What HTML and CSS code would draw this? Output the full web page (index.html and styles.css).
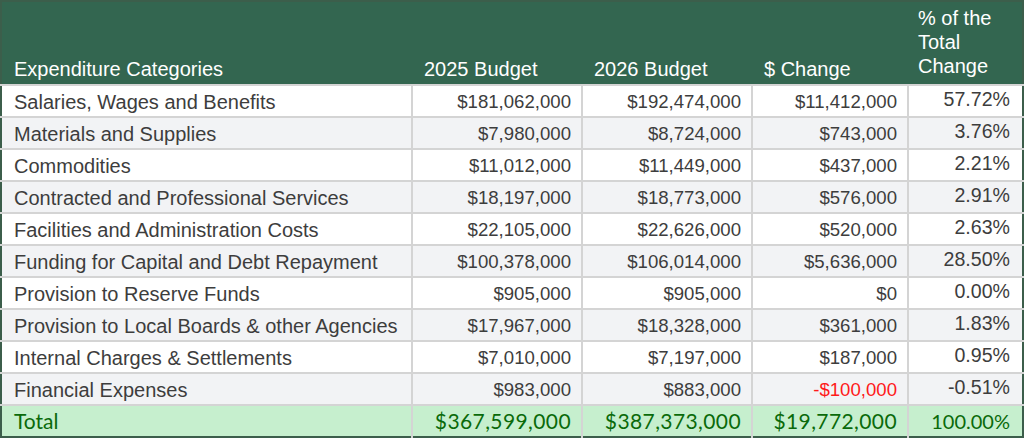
FILE: index.html
```html
<!DOCTYPE html>
<html>
<head>
<meta charset="utf-8">
<link rel="stylesheet" href="styles.css">
</head>
<body>
<table class="budget">
  <colgroup>
    <col class="c-cat"><col class="c-num"><col class="c-num"><col class="c-chg"><col class="c-pct">
  </colgroup>
  <thead>
    <tr>
      <th class="cat">Expenditure Categories</th>
      <th>2025 Budget</th>
      <th>2026 Budget</th>
      <th>$ Change</th>
      <th class="pct">% of the Total Change</th>
    </tr>
  </thead>
  <tbody>
    <tr><td class="cat">Salaries, Wages and Benefits</td><td>$181,062,000</td><td>$192,474,000</td><td>$11,412,000</td><td class="pct">57.72%</td></tr>
    <tr><td class="cat">Materials and Supplies</td><td>$7,980,000</td><td>$8,724,000</td><td>$743,000</td><td class="pct">3.76%</td></tr>
    <tr><td class="cat">Commodities</td><td>$11,012,000</td><td>$11,449,000</td><td>$437,000</td><td class="pct">2.21%</td></tr>
    <tr><td class="cat">Contracted and Professional Services</td><td>$18,197,000</td><td>$18,773,000</td><td>$576,000</td><td class="pct">2.91%</td></tr>
    <tr><td class="cat">Facilities and Administration Costs</td><td>$22,105,000</td><td>$22,626,000</td><td>$520,000</td><td class="pct">2.63%</td></tr>
    <tr><td class="cat">Funding for Capital and Debt Repayment</td><td>$100,378,000</td><td>$106,014,000</td><td>$5,636,000</td><td class="pct">28.50%</td></tr>
    <tr><td class="cat">Provision to Reserve Funds</td><td>$905,000</td><td>$905,000</td><td>$0</td><td class="pct">0.00%</td></tr>
    <tr><td class="cat">Provision to Local Boards &amp; other Agencies</td><td>$17,967,000</td><td>$18,328,000</td><td>$361,000</td><td class="pct">1.83%</td></tr>
    <tr><td class="cat">Internal Charges &amp; Settlements</td><td>$7,010,000</td><td>$7,197,000</td><td>$187,000</td><td class="pct">0.95%</td></tr>
    <tr><td class="cat">Financial Expenses</td><td>$983,000</td><td>$883,000</td><td class="neg">-$100,000</td><td class="pct">-0.51%</td></tr>
    <tr class="total"><td class="cat">Total</td><td>$367,599,000</td><td>$387,373,000</td><td>$19,772,000</td><td class="pct">100.00%</td></tr>
  </tbody>
</table>
</body>
</html>
```
FILE: styles.css
```css
html, body {
  margin: 0;
  padding: 0;
  background: #ffffff;
}
.budget {
  width: 1024px;
  border-collapse: collapse;
  table-layout: fixed;
  font-family: "Liberation Sans", Arial, sans-serif;
  font-size: 18.6px;
  color: #3d3d3d;
  border: 2px solid #3c5e4b;
}
.c-cat { width: 411px; }
.c-num { width: 170px; }
.c-chg { width: 156px; }
.c-pct { width: 115px; }
.budget thead tr { height: 84px; }
.budget thead th {
  background: #336650;
  color: #ffffff;
  font-weight: normal;
  font-size: 20px;
  text-align: left;
  vertical-align: bottom;
  padding: 0 0 3px 12px;
  line-height: 24px;
  border: none;
}
.budget thead th.pct { padding-left: 10px; padding-right: 22px; padding-bottom: 6px; }
.budget tbody tr { height: 32px; }
.budget tbody td {
  padding: 2px 10px 0 12px;
  text-align: right;
  border: 2px solid #d4d4d4;
  line-height: 20px;
  white-space: nowrap;
}
.budget tbody td.cat { font-size: 20px; }
.budget tbody tr:nth-child(even) td { background: #f2f3f5; }
.budget tbody td.cat { text-align: left; padding-left: 12px; border-left: none; }
.budget tbody td.pct { font-size: 19.6px; padding-right: 12px; border-right: none; padding-top: 0; padding-bottom: 4px; }
.budget tbody td.neg { color: #ff1a1a; }
.budget tbody tr.total td {
  background: #c6efce;
  color: #0a6a0a;
  font-family: Lato, "Liberation Sans", sans-serif;
  font-size: 21px;
  letter-spacing: 0.4px;
  border-bottom: none;
  padding-top: 0;
}
.budget tbody tr.total td.cat { letter-spacing: 0; }
.budget tbody tr.total td.pct { padding-bottom: 0; letter-spacing: 0; font-size: 20px; }
```
